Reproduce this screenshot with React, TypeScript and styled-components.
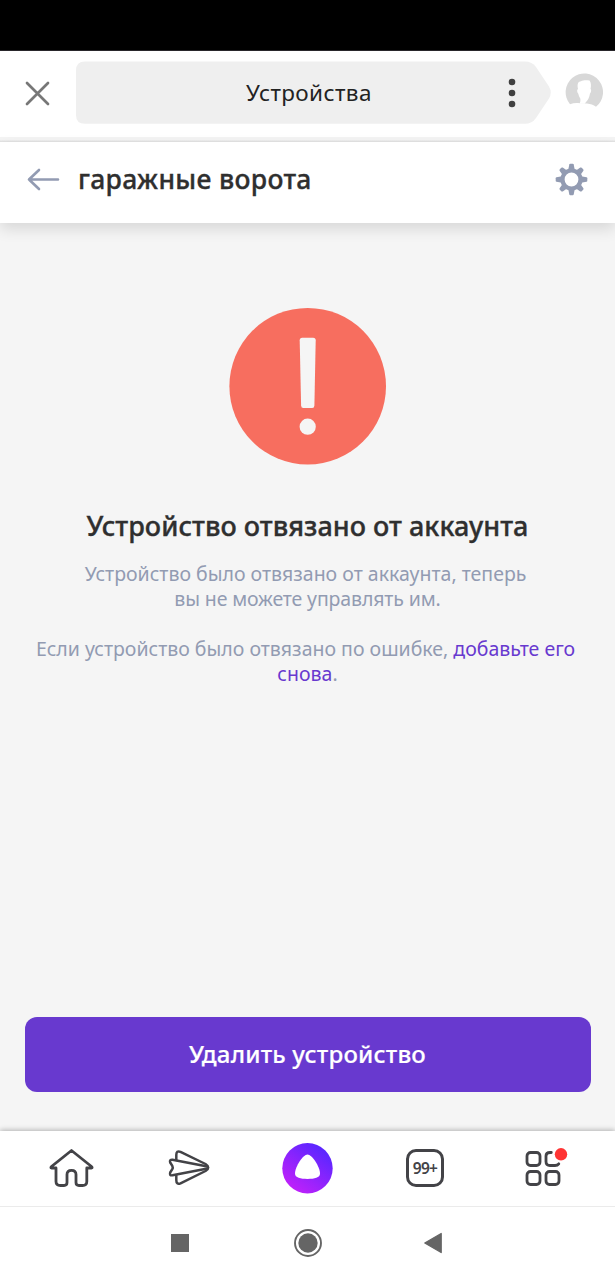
import React from 'react';
import styled, { createGlobalStyle } from 'styled-components';

const GlobalStyle = createGlobalStyle`
  * { box-sizing: border-box; }
  body {
    margin: 0;
    background: #fff;
    font-family: "Noto Sans", "Open Sans", sans-serif;
    color: #2f2f2f;
  }
  svg { display: block; }
`;

const Screen = styled.div`
  width: 615px;
  height: 1280px;
  display: flex;
  flex-direction: column;
  overflow: hidden;
  background: #f5f5f5;
`;

const StatusBar = styled.div`
  flex: none;
  height: 51px;
  background: #000;
  border-bottom: 1px solid #29272b;
`;

const BrowserBar = styled.div`
  flex: none;
  height: 86px;
  display: flex;
  align-items: flex-start;
  background: #fff;
`;

const CloseButton = styled.div`
  width: 76px;
  padding: 30px 0 0 25px;
`;

const AddressPill = styled.div`
  display: grid;
  width: 476px;
  height: 63px;
  margin-top: 10px;
  > * { grid-area: 1 / 1; }
`;

const PillContent = styled.div`
  display: flex;
  align-items: center;
  padding-left: 170px;
`;

const PillLabel = styled.div<{ $tracking: number }>`
  flex: none;
  width: 262px;
  font-size: 22.5px;
  line-height: 30px;
  letter-spacing: ${(p) => p.$tracking}px;
  white-space: nowrap;
  color: #222;
`;

const Avatar = styled.div`
  padding: 22px 0 0 13px;
`;

const Divider = styled.div`
  flex: none;
  height: 5px;
  background: linear-gradient(#f4f4f4 0 55%, #dedede);
`;

const PageHeader = styled.header`
  flex: none;
  height: 81px;
  display: flex;
  align-items: center;
  padding: 0 27px 6px;
  background: #fff;
  box-shadow: 0 6px 14px rgba(0, 0, 0, 0.12);
`;

const PageTitle = styled.h1<{ $tracking: number }>`
  flex: 1;
  margin: 0 0 0 18px;
  padding-bottom: 2px;
  font-size: 26.5px;
  line-height: 36px;
  font-weight: 500;
  -webkit-text-stroke: 0.35px currentColor;
  letter-spacing: ${(p) => p.$tracking}px;
  white-space: nowrap;
`;

const Content = styled.main`
  flex: 1;
  display: flex;
  flex-direction: column;
  align-items: center;
  padding: 84px 25px 39px;
`;

const Heading = styled.h2<{ $tracking: number }>`
  margin: 43px 0 0;
  font-size: 27px;
  line-height: 36px;
  font-weight: 500;
  -webkit-text-stroke: 0.35px currentColor;
  letter-spacing: ${(p) => p.$tracking}px;
  white-space: nowrap;
`;

const Paragraph = styled.p<{ $gap: number }>`
  margin: ${(p) => p.$gap}px 0 0;
  display: flex;
  flex-direction: column;
  align-items: center;
  color: #929bb2;
  font-size: 19.5px;
  line-height: 25px;
`;

const Line = styled.span<{ $tracking?: number; $trail?: number }>`
  letter-spacing: ${(p) => p.$tracking ?? 0}px;
  padding-right: ${(p) => p.$trail ?? 0}px;
  white-space: nowrap;
`;

const Link = styled.a`
  color: #6839cf;
`;

const DeleteButton = styled.button<{ $tracking: number }>`
  width: 566px;
  height: 75px;
  margin-top: auto;
  padding: 0 0 3px;
  border: 0;
  border-radius: 12px;
  background: #6839cf;
  color: #fff;
  font-family: inherit;
  font-size: 24px;
  font-weight: 500;
  -webkit-text-stroke: 0.2px currentColor;
  letter-spacing: ${(p) => p.$tracking}px;
`;

const TabBar = styled.nav`
  flex: none;
  height: 75px;
  display: grid;
  grid-template-columns: repeat(5, 118px);
  justify-content: center;
  justify-items: center;
  align-items: center;
  padding-bottom: 1px;
  background: #fff;
  box-shadow: 0 -1px 5px rgba(0, 0, 0, 0.28);
`;

const TabCounter = styled.div`
  width: 38px;
  height: 38px;
  display: flex;
  align-items: center;
  justify-content: center;
  margin-right: 1px;
  border: 3px solid #434347;
  border-radius: 10px;
  color: #434347;
  font-size: 15.5px;
  font-weight: 600;
  letter-spacing: -0.7px;
`;

const SystemBar = styled.div`
  flex: none;
  height: 74px;
  display: grid;
  grid-template-columns: 128px 127px 124px;
  justify-content: center;
  justify-items: center;
  align-items: center;
  padding: 0 4px 2px 0;
  border-top: 1px solid #ebebeb;
  background: #fff;
`;

const CloseIcon = () => (
  <svg width="25" height="25" viewBox="0 0 25 25" stroke="#777" strokeWidth="2.7" strokeLinecap="round">
    <path d="M2 2 23 23M23 2 2 23" />
  </svg>
);

const PillShape = () => (
  <svg width="476" height="63" viewBox="0 0 476 63" fill="#efefef">
    <path d="M9 .5H449Q456 .5 460 6L473 25.500Q476.500 31.500 473 37.500L460 57Q456 62.800 449 62.800H9Q0 62.800 0 54V9.500Q0 .5 9 .5Z" />
  </svg>
);

const MoreIcon = () => (
  <svg width="8" height="30" viewBox="0 0 8 30" fill="#404040">
    <circle cx="4" cy="4" r="3.300" />
    <circle cx="4" cy="15" r="3.300" />
    <circle cx="4" cy="26" r="3.300" />
  </svg>
);

const AvatarIcon = () => (
  <svg width="38" height="38" viewBox="0 0 38 38">
    <path
      fill="#d8d8d8"
      d="M5 31.200A18.700 18.700 0 1 1 31 33.800C28.500 31.500 25.500 31 22 30.500L14.500 30.300C11 29.800 8 30.300 5 31.200Z"
    />
    <path
      fill="#fff"
      d="M13 16C11.800 10.500 13.500 8.500 16 8.300C18.500 6.800 22 7.300 24.500 7.500C26.200 9.500 26.300 13 25.500 16C26.600 16.300 26.200 19.500 25 20.500C24.500 24 23 27.500 20.800 29.200L19.800 30.800H14.300C15.400 29.500 15.600 27.500 15.300 25.500C14.200 24 13.600 22 13.300 20.800C11.900 19.500 11.700 16.500 13 16Z"
    />
  </svg>
);

const BackIcon = () => (
  <svg width="33" height="24" viewBox="0 0 33 24" fill="none" stroke="#929bb2" strokeWidth="2.600" strokeLinecap="round" strokeLinejoin="round">
    <path d="M31 11.500H2M12 2 2 11.500 12 21" />
  </svg>
);

const GearIcon = () => (
  <svg width="33" height="33" viewBox="-16.500 -16.500 33 33">
    <circle r="9" fill="none" stroke="#929bb2" strokeWidth="4.200" />
    {[0, 90, 180, 270].map((a) => (
      <path key={a} transform={`rotate(${a})`} fill="#929bb2" d="M-3.300-9.500L-2.200-15Q-2-15.800-1.200-15.800H1.200Q2-15.800 2.200-15L3.300-9.500Z" />
    ))}
    {[45, 135, 225, 315].map((a) => (
      <path key={a} transform={`rotate(${a})`} fill="#929bb2" d="M-3.100-9.500L-2.200-14.600Q-2-15.500-1-15.500H1Q2-15.500 2.200-14.600L3.100-9.500Z" />
    ))}
  </svg>
);

const AlertIcon = () => (
  <svg width="158" height="158" viewBox="0 0 158 158">
    <circle cx="78.700" cy="79.200" r="78.300" fill="#f76e5f" />
    <path fill="#f5f5f5" d="M73.200 30.700H84.200Q86.700 30.700 86.700 33.200L85.400 98.500Q85.300 101 83.200 101H74.300Q72.200 101 72.100 98.500L70.700 33.200Q70.700 30.700 73.200 30.700Z" />
    <circle cx="78.700" cy="119.700" r="8.100" fill="#f5f5f5" />
  </svg>
);

const HomeIcon = () => (
  <svg width="46" height="42" viewBox="0 0 46 42" fill="none" stroke="#434347" strokeWidth="2.800" strokeLinejoin="round" strokeLinecap="round">
    <path d="M7 21H2.500Q1.300 20.500 2.500 19.500L22.500 3.500 42.500 19.500Q43.700 20.500 42.500 21H37.800V34.500Q37.800 38.500 33.500 38.500H30Q27 38.500 27 35.500V27.500Q27 23.300 22.500 23.300T18 27.500V35.500Q18 38.500 15 38.500H11.500Q7 38.500 7 34.500Z" />
  </svg>
);

const PlaneIcon = () => (
  <svg width="44" height="40" viewBox="0 0 44 40" fill="none" stroke="#434347" strokeWidth="2.500" strokeLinejoin="round" strokeLinecap="round">
    <path d="M8.300 12V7Q8.300 2.200 12.500 3.800L37.500 16Q43 19.500 37.500 23L12.500 35.300Q8.300 37 8.300 32V27.500" />
    <path d="M39.500 18.500 4.500 11.700Q1.200 11.500 2.200 14.500L4.300 17.800Q5.200 19.500 4.300 21.200L2.200 24.500Q1.200 27.800 4.500 27.300L39.500 20.500" />
  </svg>
);

const AliceIcon = () => (
  <svg width="52" height="52" viewBox="0 0 52 52">
    <defs>
      <linearGradient id="alice" x1="0.150" y1="0.900" x2="0.750" y2="0.100">
        <stop offset="0" stopColor="#c121fa" />
        <stop offset="1" stopColor="#5c26ff" />
      </linearGradient>
    </defs>
    <circle cx="25.500" cy="26.300" r="25.200" fill="url(#alice)" />
    <path fill="#fff" d="M25.500 12.600C30 12.600 38 25 38 31.600C38 35.900 32.500 37 25.500 37S13 35.900 13 31.600C13 25 21 12.600 25.500 12.600Z" />
  </svg>
);

const ServicesIcon = () => (
  <svg width="48" height="44" viewBox="0 0 48 44" fill="none" stroke="#434347" strokeWidth="2.800">
    <rect x="7" y="6.500" width="13" height="13" rx="3.500" />
    <rect x="7" y="25.500" width="13" height="13" rx="3.500" />
    <rect x="26" y="25.500" width="13" height="13" rx="3.500" />
    <path d="M31.300 6.500H30Q26 6.500 26 10V15.500Q26 19.500 30 19.500H35Q37.500 19.500 38.800 17.800" strokeLinecap="round" />
    <circle cx="41" cy="8.300" r="6.200" fill="#ff3434" stroke="none" />
  </svg>
);

const RecentsIcon = () => (
  <svg width="18" height="18" viewBox="0 0 18 18"><rect width="18" height="18" fill="#656565" /></svg>
);

const HomeButtonIcon = () => (
  <svg width="28" height="28" viewBox="0 0 28 28">
    <circle cx="14" cy="14" r="13" fill="none" stroke="#656565" strokeWidth="1.900" />
    <circle cx="14" cy="14" r="9.700" fill="#656565" />
  </svg>
);

const SystemBackIcon = () => (
  <svg width="18" height="22" viewBox="0 0 18 22">
    <path d="M17.200 1.500V20.500L.8 11Z" fill="#656565" stroke="#656565" strokeWidth="1.300" strokeLinejoin="round" />
  </svg>
);

export default function App() {
  return (
    <Screen>
      <GlobalStyle />
      <StatusBar />
      <BrowserBar>
        <CloseButton><CloseIcon /></CloseButton>
        <AddressPill>
          <PillShape />
          <PillContent>
            <PillLabel $tracking={0.4}>Устройства</PillLabel>
            <MoreIcon />
          </PillContent>
        </AddressPill>
        <Avatar><AvatarIcon /></Avatar>
      </BrowserBar>
      <Divider />
      <PageHeader>
        <BackIcon />
        <PageTitle $tracking={0.33}>гаражные ворота</PageTitle>
        <GearIcon />
      </PageHeader>
      <Content>
        <AlertIcon />
        <Heading $tracking={0.03}>Устройство отвязано от аккаунта</Heading>
        <Paragraph $gap={17}>
          <Line $trail={4}>Устройство было отвязано от аккаунта, теперь</Line>
          <Line $tracking={-0.13}>вы не можете управлять им.</Line>
        </Paragraph>
        <Paragraph $gap={25}>
          <Line $trail={4}>Если устройство было отвязано по ошибке, <Link>добавьте его</Link></Line>
          <Line><Link>снова</Link>.</Line>
        </Paragraph>
        <DeleteButton $tracking={0.2}>Удалить устройство</DeleteButton>
      </Content>
      <TabBar>
        <HomeIcon />
        <PlaneIcon />
        <AliceIcon />
        <TabCounter>99+</TabCounter>
        <ServicesIcon />
      </TabBar>
      <SystemBar>
        <RecentsIcon />
        <HomeButtonIcon />
        <SystemBackIcon />
      </SystemBar>
    </Screen>
  );
}
